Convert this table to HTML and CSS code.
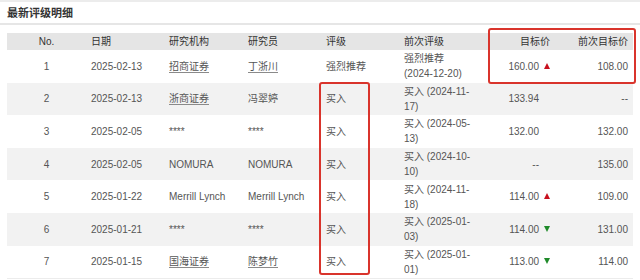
FILE: index.html
```html
<!DOCTYPE html>
<html lang="zh-CN">
<head>
<meta charset="utf-8">
<title>最新评级明细</title>
<link rel="stylesheet" href="styles.css">
</head>
<body>
<div class="page">
  <div class="topline"></div>
  <h2 class="title">最新评级明细</h2>
  <div class="sep"></div>
  <table class="grid">
    <colgroup>
      <col class="c-no"><col class="c-w"><col class="c-w"><col class="c-w"><col class="c-w"><col class="c-w"><col class="c-tp"><col class="c-w">
    </colgroup>
    <thead>
      <tr>
        <th class="no">No.</th>
        <th class="l5">日期</th>
        <th class="l5">研究机构</th>
        <th class="l6">研究员</th>
        <th class="l6">评级</th>
        <th class="l6">前次评级</th>
        <th class="r">目标价</th>
        <th class="r">前次目标价</th>
      </tr>
    </thead>
    <tbody>
      <tr>
        <td class="no">1</td><td class="l5">2025-02-13</td><td class="l5"><a class="lk">招商证券</a></td><td class="l6"><a class="lk">丁浙川</a></td><td class="l6">强烈推荐</td><td class="l6 prev">强烈推荐 (2024-12-<wbr>20)</td><td class="r">160.00<i class="ar up"></i></td><td class="r">108.00</td>
      </tr>
      <tr>
        <td class="no">2</td><td class="l5">2025-02-13</td><td class="l5"><a class="lk">浙商证券</a></td><td class="l6">冯翠婷</td><td class="l6">买入</td><td class="l6 prev">买入 (2024-11-<wbr>17)</td><td class="r">133.94<i class="ar"></i></td><td class="r">--</td>
      </tr>
      <tr>
        <td class="no">3</td><td class="l5">2025-02-05</td><td class="l5">****</td><td class="l6">****</td><td class="l6">买入</td><td class="l6 prev">买入 (2024-05-<wbr>13)</td><td class="r">132.00<i class="ar"></i></td><td class="r">132.00</td>
      </tr>
      <tr>
        <td class="no">4</td><td class="l5">2025-02-05</td><td class="l5">NOMURA</td><td class="l6">NOMURA</td><td class="l6">买入</td><td class="l6 prev">买入 (2024-10-<wbr>10)</td><td class="r">--<i class="ar"></i></td><td class="r">135.00</td>
      </tr>
      <tr>
        <td class="no">5</td><td class="l5">2025-01-22</td><td class="l5">Merrill Lynch</td><td class="l6">Merrill Lynch</td><td class="l6">买入</td><td class="l6 prev">买入 (2024-11-<wbr>18)</td><td class="r">114.00<i class="ar up"></i></td><td class="r">109.00</td>
      </tr>
      <tr>
        <td class="no">6</td><td class="l5">2025-01-21</td><td class="l5">****</td><td class="l6">****</td><td class="l6">买入</td><td class="l6 prev">买入 (2025-01-<wbr>03)</td><td class="r">114.00<i class="ar down"></i></td><td class="r">131.00</td>
      </tr>
      <tr>
        <td class="no">7</td><td class="l5">2025-01-15</td><td class="l5"><a class="lk">国海证券</a></td><td class="l6"><a class="lk">陈梦竹</a></td><td class="l6">买入</td><td class="l6 prev">买入 (2025-01-<wbr>01)</td><td class="r">113.00<i class="ar down"></i></td><td class="r">114.00</td>
      </tr>
    </tbody>
  </table>
  <div class="mark mark-price"></div>
  <div class="mark mark-rating"></div>
</div>
</body>
</html>
```

FILE: styles.css
```css
html, body {
  margin: 0;
  padding: 0;
  background: #ffffff;
}

.page {
  position: relative;
  width: 640px;
  height: 280px;
  overflow: hidden;
  font-family: "Liberation Sans", "Noto Sans CJK SC", sans-serif;
  color: #555555;
}

.topline {
  height: 2px;
  background: #ececec;
}

.title {
  margin: 0;
  padding: 2px 0 0 7px;
  height: 19px;
  line-height: 19px;
  font-size: 11px;
  font-weight: bold;
  color: #333333;
}

.sep {
  height: 2px;
  background: #e6e6e6;
  margin-bottom: 8px;
}

.grid {
  margin-left: 7px;
  width: 626px;
  border-collapse: collapse;
  table-layout: fixed;
  font-size: 10px;
}

.c-no { width: 79px; }
.c-w { width: 78px; }
.c-tp { width: 79px; }

.grid th {
  height: 17px;
  padding-top: 0;
  padding-bottom: 0;
  line-height: 17px;
  font-weight: normal;
  color: #333333;
  background: #e5e5e5;
  white-space: nowrap;
}

.grid tbody tr {
  height: 32.6px;
}

.grid tbody tr:nth-child(even) td {
  background: #f2f2f2;
}

.grid tbody tr:last-child td {
  border-bottom: 1px solid #ececec;
}

.grid td {
  padding-top: 0;
  padding-bottom: 0;
  line-height: 15px;
  vertical-align: middle;
  color: #555555;
}

.no { text-align: center; padding-left: 0; padding-right: 0; }
.l5 { text-align: left; padding-left: 5px; padding-right: 4px; }
.l6 { text-align: left; padding-left: 6px; padding-right: 4px; }
.r { text-align: right; padding-left: 4px; padding-right: 5px; }

.lk {
  color: #555555;
  text-decoration: underline;
  text-underline-offset: 2px;
  text-decoration-color: #8a8a8a;
}

.ar {
  display: inline-block;
  width: 0;
  height: 0;
  margin-left: 5px;
  border-left: 3.5px solid transparent;
  border-right: 3.5px solid transparent;
  border-bottom: 6px solid transparent;
  vertical-align: 1px;
}

.ar.up {
  border-bottom: 6px solid #c8101e;
}

.ar.down {
  border-bottom: 0;
  border-top: 6px solid #1f8a2a;
}

.mark {
  position: absolute;
  border: 2px solid #d9342c;
  border-radius: 3px;
  box-sizing: border-box;
}

.mark-price {
  left: 488px;
  top: 28px;
  width: 148px;
  height: 56px;
}

.mark-rating {
  left: 319px;
  top: 82px;
  width: 51px;
  height: 193px;
}
```
